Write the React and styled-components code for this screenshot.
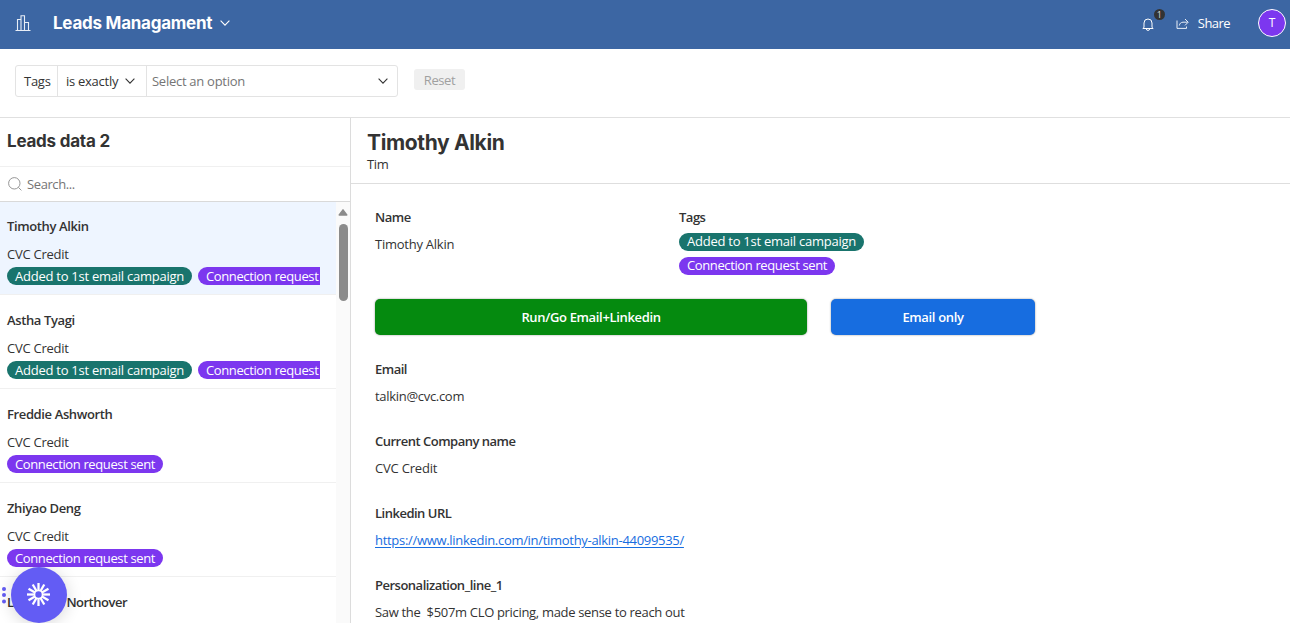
import React from "react";
import styled, { createGlobalStyle } from "styled-components";

const Global = createGlobalStyle`
  * { box-sizing: border-box; }
  body { margin: 0; overflow: hidden; background: #fff; color: #333;
    font: 13px/20px "Open Sans", "Noto Sans", sans-serif; }
  h1, h2, h3, p { margin: 0; }
`;

const Page = styled.div`
  height: 623px;
  display: flex;
  flex-direction: column;
  overflow: hidden;
`;

const TopBar = styled.header`
  height: 49px;
  flex: none;
  display: flex;
  align-items: center;
  padding: 0 4px 3px 15px;
  background: #3c66a3;
  color: #fff;
`;
const AppTitle = styled.h1`
  font: 700 17px/24px Inter, sans-serif;
  letter-spacing: -0.25px;
  margin: 0 8px 0 22px;
`;
const TopActions = styled.div`
  margin-left: auto;
  display: flex;
  align-items: center;
`;
const Bell = styled.div`
  position: relative;
  display: flex;
  margin: 2px 22px 0 0;
`;
const Count = styled.span`
  position: absolute;
  left: 12px;
  top: -9px;
  width: 11px;
  height: 11px;
  border-radius: 50%;
  background: #333;
  color: #ddd;
  font: 9px/11px "Open Sans", sans-serif;
  text-align: center;
`;
const Share = styled.span`
  font-weight: 500;
  letter-spacing: -0.55px;
  margin: 0 28px 0 9px;
`;
const Avatar = styled.div`
  width: 28px;
  height: 28px;
  border-radius: 50%;
  border: 1px solid #fff;
  background: #7c37ef;
  font-size: 12px;
  line-height: 26px;
  text-align: center;
`;

const Filters = styled.div`
  height: 69px;
  flex: none;
  display: flex;
  align-items: flex-start;
  padding: 16px 15px;
  border-bottom: 1px solid #e0e0e0;
`;
const FilterGroup = styled.div`
  display: flex;
  width: 383px;
  height: 32px;
  border: 1px solid #e3e3e3;
  border-radius: 3px;
  letter-spacing: -0.27px;
`;
const FilterCell = styled.div`
  display: flex;
  align-items: center;
  justify-content: space-between;
  width: ${(p) => p.$width}px;
  padding: 0 ${(p) => p.$right || 8}px 0 ${(p) => p.$left || 8}px;
  color: ${(p) => (p.$muted ? "#757575" : "#333")};
  white-space: nowrap;
  & + & { border-left: 1px solid #e3e3e3; }
`;
const Reset = styled.button`
  width: 51px;
  height: 21px;
  margin: 4px 0 0 16px;
  padding: 1px 0 0;
  border: 0;
  border-radius: 3px;
  background: #f0f0f0;
  color: #a0a0a0;
  font: 13px/20px "Open Sans", sans-serif;
  letter-spacing: -0.4px;
`;

const Body = styled.main`
  flex: 1;
  min-height: 0;
  display: flex;
`;
const Sidebar = styled.aside`
  width: 351px;
  flex: none;
  display: flex;
  flex-direction: column;
  border-right: 1px solid #dcdcdc;
`;
const SidebarTitle = styled.h2`
  height: 49px;
  flex: none;
  padding: 11px 7px;
  border-bottom: 1px solid #f0f0f0;
  font: 700 17px/24px Inter, sans-serif;
  letter-spacing: -0.22px;
`;
const Search = styled.div`
  height: 35px;
  flex: none;
  display: flex;
  align-items: center;
  gap: 5px;
  padding-left: 8px;
  border-bottom: 1px solid #d9d9d9;
  color: #757575;
  letter-spacing: -0.4px;
`;
const ListArea = styled.div`
  flex: 1;
  min-height: 0;
  display: flex;
`;
const List = styled.div`
  width: 336px;
  overflow: hidden;
`;
const ScrollTrack = styled.div`
  width: 14px;
  background: #fafafa;
  display: flex;
  flex-direction: column;
  align-items: center;
  padding-top: 7px;
  gap: 8px;
`;
const ScrollThumb = styled.div`
  width: 9px;
  height: 77px;
  border-radius: 5px;
  background: #8b8b8b;
`;
const Row = styled.article`
  height: 94px;
  padding: 15px 16px 0 7px;
  border-bottom: 1px solid #f0f0f0;
  background: ${(p) => (p.$active ? "#eef5ff" : "#fff")};
  &:first-child { height: 93px; padding-top: 14px; }
`;
const RowName = styled.h3`
  font: 600 13px/20px "Open Sans", sans-serif;
  letter-spacing: ${(p) => p.$track || -0.38}px;
  margin-bottom: 8px;
  white-space: pre;
`;
const RowCompany = styled.p`
  letter-spacing: -0.25px;
  margin-bottom: 3px;
`;
const TagLine = styled.div`
  display: flex;
  gap: 6px;
  overflow: hidden;
`;
const Tag = styled.span`
  flex: none;
  width: ${(p) => (p.$kind === "campaign" ? 185 : 156)}px;
  height: 18px;
  border-radius: 9px;
  background: ${(p) => (p.$kind === "campaign" ? "#19746d" : "#7c37ef")};
  color: #fff;
  line-height: 18px;
  letter-spacing: ${(p) => (p.$kind === "campaign" ? -0.25 : -0.38)}px;
  padding-left: 8px;
  white-space: nowrap;
`;

const Detail = styled.section`
  flex: 1;
`;
const DetailHeader = styled.header`
  height: 66px;
  padding: 11px 16px;
  border-bottom: 1px solid #dedede;
`;
const DetailTitle = styled.h2`
  font: 700 21px/27px Inter, sans-serif;
  letter-spacing: -0.36px;
`;
const Subtitle = styled.p`
  line-height: 16px;
  letter-spacing: -0.3px;
`;
const Fields = styled.div`
  padding: 23px 24px;
`;
const FieldPair = styled.div`
  display: grid;
  grid-template-columns: 304px 300px;
  height: 92px;
`;
const Field = styled.div`
  height: 72px;
`;
const Label = styled.h3`
  font: 600 13px/20px "Open Sans", sans-serif;
  letter-spacing: -0.5px;
`;
const Value = styled.p`
  margin-top: 7px;
  white-space: pre;
  letter-spacing: ${(p) => p.$track || -0.3}px;
`;
const Link = styled.a`
  color: #176de0;
  text-decoration: underline;
  text-underline-offset: 2px;
`;
const TagStack = styled.div`
  display: flex;
  flex-direction: column;
  gap: 6px;
  margin-top: 6px;
  ${Tag} { line-height: 16px; }
`;
const Buttons = styled.div`
  display: flex;
  gap: 24px;
  margin-bottom: 24px;
`;
const Action = styled.button`
  width: ${(p) => p.$width}px;
  height: 36px;
  border: 0;
  border-radius: 5px;
  background: ${(p) => p.$color};
  box-shadow: 0 0 2px rgba(0, 0, 0, 0.45);
  color: #fff;
  font: 600 13px/20px "Open Sans", sans-serif;
  letter-spacing: -0.34px;
`;

const Assistant = styled.div`
  position: absolute;
  left: 11px;
  top: 567px;
  width: 56px;
  height: 56px;
  border-radius: 50%;
  background: #635cf4;
  box-shadow: 0 2px 16px rgba(0, 0, 0, 0.16);
  display: flex;
  align-items: center;
  justify-content: center;
`;
const DragDots = styled.svg`
  position: absolute;
  left: 1px;
  top: 586px;
`;

const Chevron = ({ color = "#333" }) => (
  <svg width="10" height="6" viewBox="0 0 10 6" fill="none" stroke={color} strokeWidth="1.1">
    <path d="M0.6 0.7 5 5.1 9.4 0.7" />
  </svg>
);
const Buildings = () => (
  <svg width="16" height="16" viewBox="0 0 16 16" fill="none" stroke="#e8eef7" strokeWidth="1.1">
    <path d="M0.5 15.5h15M2.500 15V4.500H6M6 15V.8h3.500V15M9.500 7.500h4V15" />
  </svg>
);
const BellIcon = () => (
  <svg width="12" height="13" viewBox="0 0 12 13" fill="none" stroke="#fff" strokeWidth="1">
    <path d="M2 9.5V5a4 4 0 0 1 8 0v4.5l1.2 1H.8zM4.3 10.7a1.7 1.7 0 0 0 3.4 0" />
  </svg>
);
const ShareIcon = () => (
  <svg width="13" height="11" viewBox="0 0 13 11" fill="none" stroke="#e8eef7" strokeWidth="1">
    <path d="M1 2.500v7.900h9.500V8.500M3.300 7.500C3.600 5.500 5 4.200 7 4.200h4.500M9 1l3.200 3.200L9 7.400" />
  </svg>
);
const SearchIcon = () => (
  <svg width="14" height="14" viewBox="0 0 14 14" fill="none" stroke="#8a8a8a" strokeWidth="0.9">
    <circle cx="6.3" cy="6.3" r="5.7" />
    <path d="m10.400 10.400 3 3" />
  </svg>
);
const Burst = () => (
  <svg width="24" height="24" viewBox="-11.500 -11.500 24 24" fill="none" stroke="#fff" strokeWidth="2.3">
    <circle r="4" strokeWidth="1.6" />
    {Array.from({ length: 12 }, (_, i) => (
      <path key={i} d="M0-4V-11.500" transform={`rotate(${i * 30})`} />
    ))}
  </svg>
);

const TAGS = { campaign: "Added to 1st email campaign", request: "Connection request sent" };
const LEADS = [
  { name: "Timothy Alkin", company: "CVC Credit", tags: ["campaign", "request"], active: true },
  { name: "Astha Tyagi", company: "CVC Credit", tags: ["campaign", "request"] },
  { name: "Freddie Ashworth", company: "CVC Credit", tags: ["request"] },
  { name: "Zhiyao Deng", company: "CVC Credit", tags: ["request"] },
  { name: "Lawrence Northover", tags: [], track: -0.5 },
];

export default function App() {
  return (
    <Page>
      <Global />
      <TopBar>
        <Buildings />
        <AppTitle>Leads Managament</AppTitle>
        <Chevron color="#fff" />
        <TopActions>
          <Bell><BellIcon /><Count>1</Count></Bell>
          <ShareIcon />
          <Share>Share</Share>
          <Avatar>T</Avatar>
        </TopActions>
      </TopBar>
      <Filters>
        <FilterGroup>
          <FilterCell $width={41}>Tags</FilterCell>
          <FilterCell $width={89} $right={11}>is exactly <Chevron /></FilterCell>
          <FilterCell $width={251} $left={5} $right={9} $muted>Select an option <Chevron /></FilterCell>
        </FilterGroup>
        <Reset>Reset</Reset>
      </Filters>
      <Body>
        <Sidebar>
          <SidebarTitle>Leads data 2</SidebarTitle>
          <Search><SearchIcon />Search...</Search>
          <ListArea>
            <List>
              {LEADS.map((lead) => (
                <Row key={lead.name} $active={lead.active}>
                  <RowName $track={lead.track}>{lead.name}</RowName>
                  {lead.company && <RowCompany>{lead.company}</RowCompany>}
                  <TagLine>{lead.tags.map((t) => <Tag key={t} $kind={t}>{TAGS[t]}</Tag>)}</TagLine>
                </Row>
              ))}
            </List>
            <ScrollTrack>
              <svg width="10" height="7" viewBox="0 0 10 7"><path d="M5 0.800 8.800 6H1.200z" fill="#8b8b8b" stroke="#8b8b8b" strokeWidth="1.400" strokeLinejoin="round" /></svg>
              <ScrollThumb />
            </ScrollTrack>
          </ListArea>
        </Sidebar>
        <Detail>
          <DetailHeader>
            <DetailTitle>Timothy Alkin</DetailTitle>
            <Subtitle>Tim</Subtitle>
          </DetailHeader>
          <Fields>
            <FieldPair>
              <Field><Label>Name</Label><Value $track={-0.25}>Timothy Alkin</Value></Field>
              <Field>
                <Label>Tags</Label>
                <TagStack><Tag $kind="campaign">{TAGS.campaign}</Tag><Tag $kind="request">{TAGS.request}</Tag></TagStack>
              </Field>
            </FieldPair>
            <Buttons>
              <Action $width={432} $color="#058a0f">Run/Go Email+Linkedin</Action>
              <Action $width={204} $color="#176de0">Email only</Action>
            </Buttons>
            <Field><Label>Email</Label><Value>talkin@cvc.com</Value></Field>
            <Field><Label>Current Company name</Label><Value $track={-0.2}>CVC Credit</Value></Field>
            <Field>
              <Label>Linkedin URL</Label>
              <Value><Link>https://www.linkedin.com/in/timothy-alkin-44099535/</Link></Value>
            </Field>
            <Field><Label>Personalization_line_1</Label><Value $track={-0.32}>{"Saw the  $507m CLO pricing, made sense to reach out"}</Value></Field>
          </Fields>
        </Detail>
      </Body>
      <DragDots width="6" height="18" viewBox="0 0 6 18" fill="#635cf4">
        <circle cx="3" cy="3" r="2" /><circle cx="3" cy="9" r="2" /><circle cx="3" cy="15.500" r="2" />
      </DragDots>
      <Assistant><Burst /></Assistant>
    </Page>
  );
}
